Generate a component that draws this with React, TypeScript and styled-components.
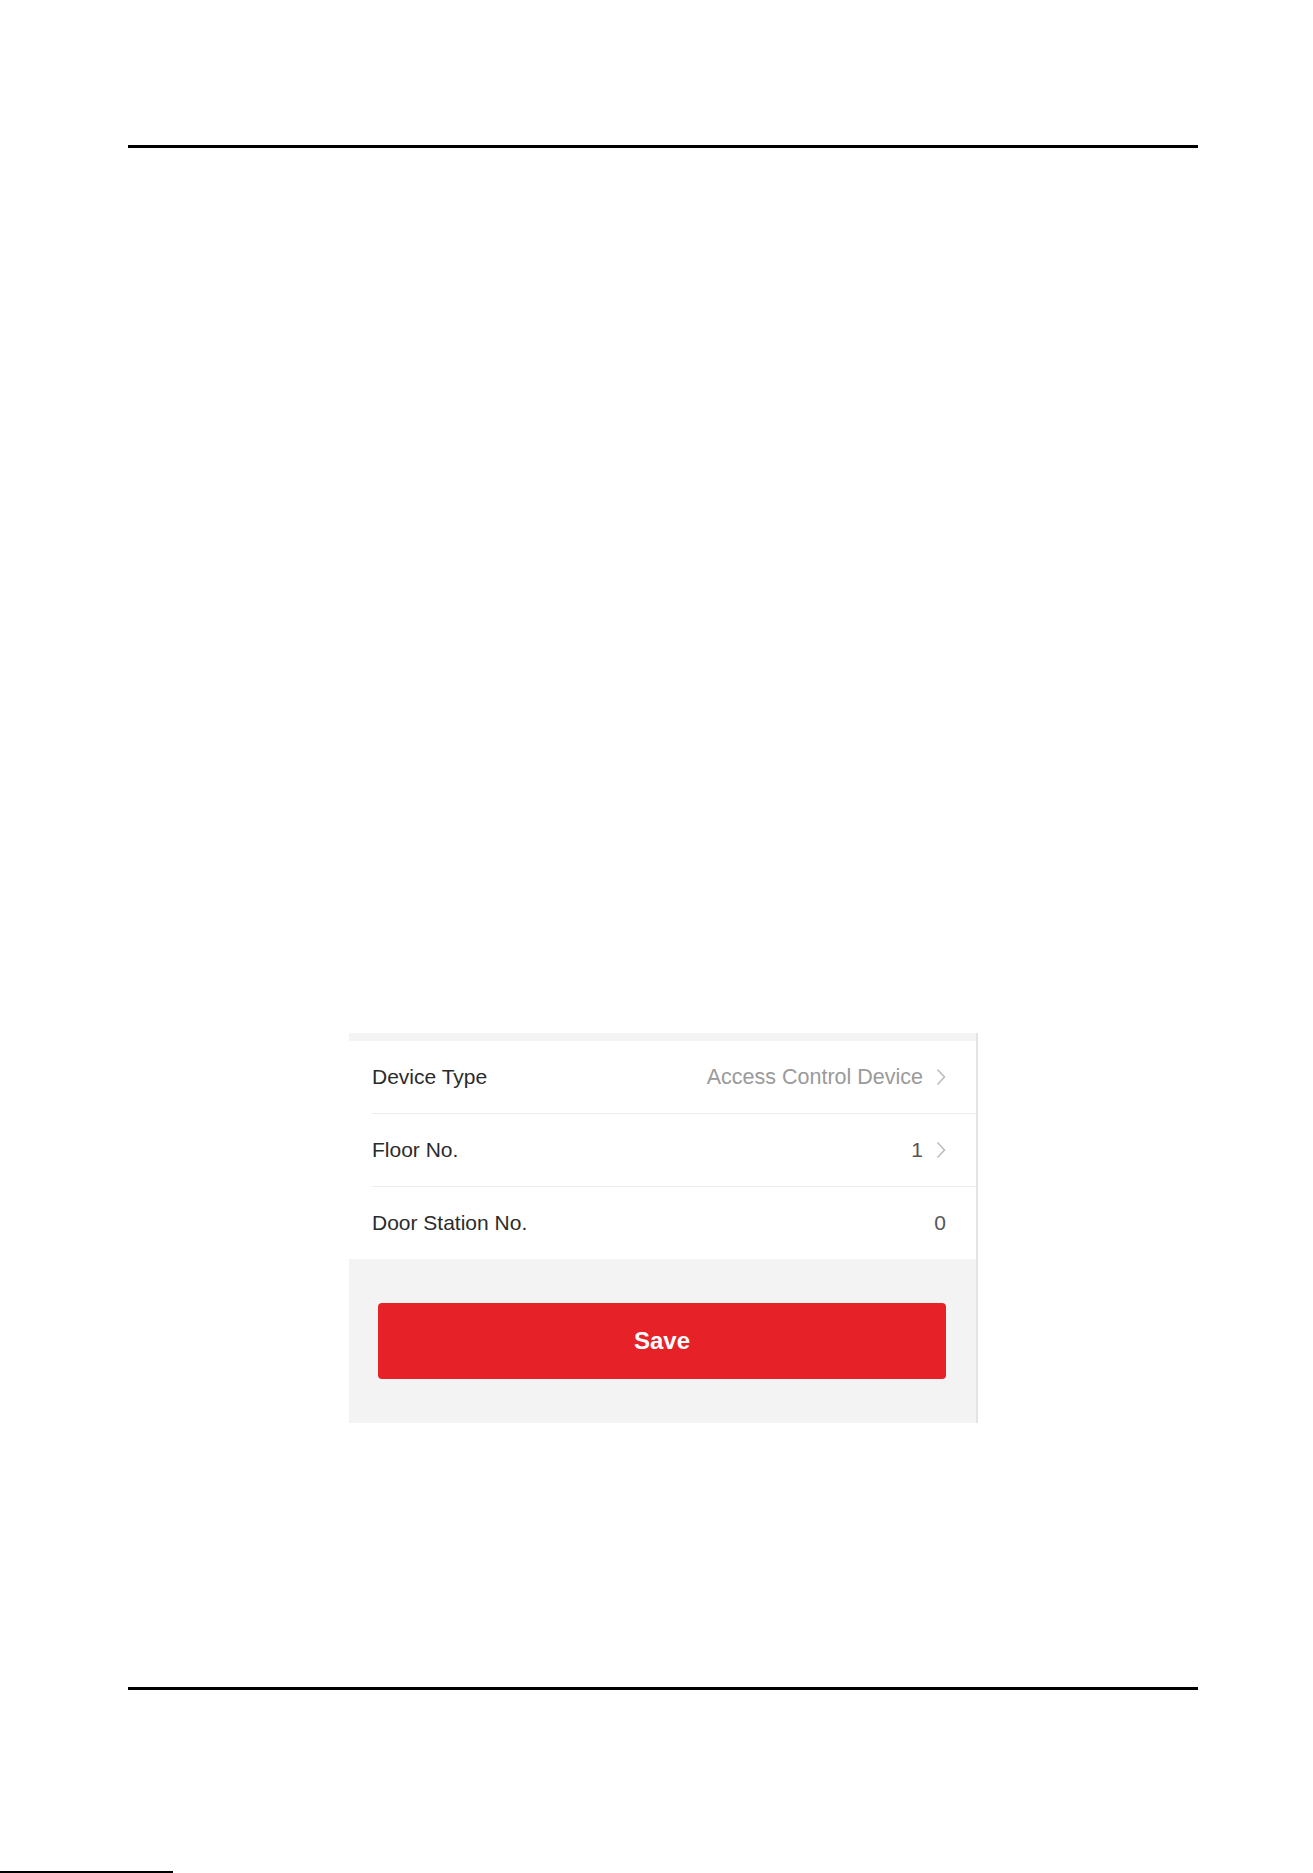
import styled, { createGlobalStyle } from "styled-components";

type row = {
  label: string;
  value: string;
  muted?: boolean;
  arrow?: boolean;
};

const rows: row[] = [
  { label: "Device Type", value: "Access Control Device", muted: true, arrow: true },
  { label: "Floor No.", value: "1", arrow: true },
  { label: "Door Station No.", value: "0" },
];

const Global = createGlobalStyle`
  html, body {
    margin: 0;
    padding: 0;
    background: #ffffff;
  }
  body {
    font-family: "Liberation Sans", Arial, sans-serif;
  }
`;

const Page = styled.div`
  width: 1313px;
  height: 1873px;
  display: flex;
  flex-direction: column;
  padding-top: 145px;
  box-sizing: border-box;
  background: #ffffff;
`;

const Rule = styled.div<{ $thick: number }>`
  margin: 0 115px 0 128px;
  height: ${(p) => p.$thick}px;
  flex-shrink: 0;
  background: #000000;
`;

const Body = styled.div`
  display: flex;
  flex-direction: column;
  padding: 885px 0 264px 349px;
`;

const Panel = styled.div`
  width: 629px;
  display: flex;
  flex-direction: column;
  border-right: 2px solid #e4e4e4;
  box-sizing: border-box;
`;

const TopStrip = styled.div`
  height: 8px;
  background: #f4f4f4;
`;

const Row = styled.div`
  background: #ffffff;
  padding-left: 23px;
`;

const RowInner = styled.div<{ $last?: boolean }>`
  height: 72px;
  display: flex;
  align-items: center;
  justify-content: space-between;
  padding-right: 30px;
  border-bottom: ${(p) => (p.$last ? "none" : "1px solid #ececec")};
`;

const Label = styled.div`
  font-size: 21px;
  color: #2b2b2b;
`;

const Value = styled.div`
  display: flex;
  align-items: center;
  gap: 13px;
`;

const ValueText = styled.span<{ $muted?: boolean }>`
  font-size: ${(p) => (p.$muted ? "21.5px" : "21px")};
  color: ${(p) => (p.$muted ? "#9a9a9a" : "#555555")};
`;

const Footer = styled.div`
  height: 164px;
  background: #f3f3f3;
  padding: 44px 30px 0 29px;
  box-sizing: border-box;
`;

const SaveButton = styled.button`
  width: 100%;
  height: 76px;
  border: none;
  border-radius: 4px;
  background: #e62128;
  color: #ffffff;
  font-family: "Liberation Sans", Arial, sans-serif;
  font-size: 24px;
  font-weight: bold;
  cursor: pointer;
`;

const Scrap = styled.div`
  margin-top: auto;
  width: 173px;
  height: 2px;
  flex-shrink: 0;
  background: #000000;
`;

const Chevron = () => (
  <svg width="10" height="18" viewBox="0 0 10 18">
    <polyline points="1.5,1.5 8.5,9 1.5,16.5" fill="none" stroke="#bdbdbd" strokeWidth="1.6" />
  </svg>
);

export default function App() {
  return (
    <>
      <Global />
      <Page>
        <Rule $thick={3} />
        <Body>
          <Panel>
            <TopStrip />
            {rows.map((item, i) => (
              <Row key={item.label}>
                <RowInner $last={i === rows.length - 1}>
                  <Label>{item.label}</Label>
                  <Value>
                    <ValueText $muted={item.muted}>{item.value}</ValueText>
                    {item.arrow && <Chevron />}
                  </Value>
                </RowInner>
              </Row>
            ))}
            <Footer>
              <SaveButton>Save</SaveButton>
            </Footer>
          </Panel>
        </Body>
        <Rule $thick={3} />
        <Scrap />
      </Page>
    </>
  );
}
